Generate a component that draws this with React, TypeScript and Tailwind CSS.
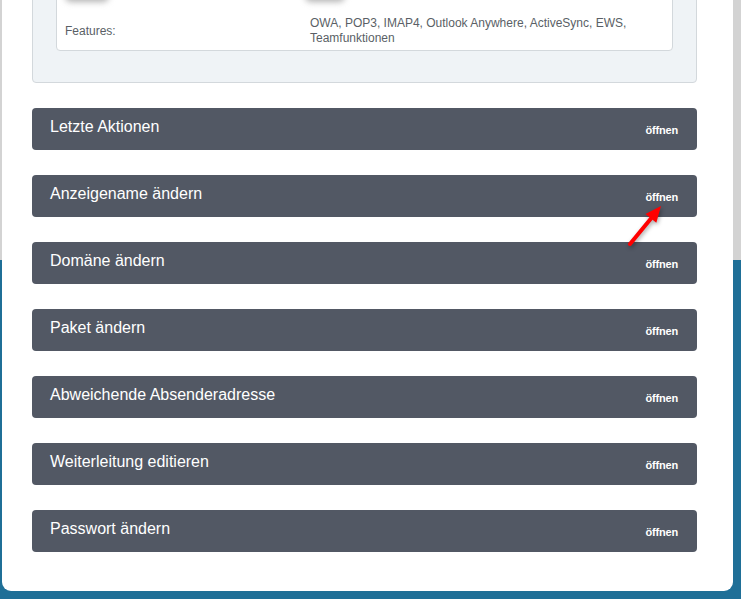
import React from "react";

const items = [
  "Letzte Aktionen",
  "Anzeigename ändern",
  "Domäne ändern",
  "Paket ändern",
  "Abweichende Absenderadresse",
  "Weiterleitung editieren",
  "Passwort ändern",
];

export default function App() {
  return (
    <div
      className="relative w-[741px] h-[599px] overflow-hidden bg-[linear-gradient(to_bottom,#d3d3d3_260px,#1f6f97_260px)]"
      style={{ fontFamily: '"Liberation Sans", Arial, sans-serif' }}
    >
      <div className="relative ml-[2px] w-[731px] h-[591px] bg-white rounded-b-[9px] px-[30px] overflow-hidden">
        {/* info panel */}
        <div className="relative w-[665px] mt-[-17px] bg-[#eff3f6] border border-[#d3d8dc] rounded-b-[4px] px-[23px] pb-[31px]">
          <div className="bg-white border border-[#d3d8dc] rounded-b-[4px] pt-[31px] pb-[4px] px-[8px]">
            <div className="flex items-center text-[12px] leading-[15px] text-[#5a5f66]">
              <div className="w-[245px]">Features:</div>
              <div>
                OWA, POP3, IMAP4, Outlook Anywhere, ActiveSync, EWS,
                <br />
                Teamfunktionen
              </div>
            </div>
          </div>
          <div className="absolute left-[32px] top-[6px] w-[44px] h-[12px] rounded-full bg-[#b4b4b4] blur-[3px]" />
          <div className="absolute left-[272px] top-[6px] w-[40px] h-[12px] rounded-full bg-[#b4b4b4] blur-[3px]" />
        </div>

        {/* accordion bars */}
        <div className="mt-[25px] flex flex-col gap-[25px] w-[665px]">
          {items.map((t) => (
            <div
              key={t}
              className="h-[42px] bg-[#525864] rounded-[4px] flex items-center justify-between pl-[18px] pr-[19px] text-white"
            >
              <span className="text-[16px] leading-[18px] mt-[-4px]">{t}</span>
              <span className="text-[11px] font-bold leading-[13px] mt-[2px] tracking-[-0.2px]">öffnen</span>
            </div>
          ))}
        </div>
      </div>

      {/* red arrow */}
      <svg
        className="absolute left-0 top-0 pointer-events-none"
        width="741"
        height="599"
        style={{ filter: "drop-shadow(1px 2px 2px rgba(0,0,0,0.35))" }}
      >
        <line x1="630" y1="244" x2="651" y2="218.4" stroke="#ff0000" strokeWidth="4" strokeLinecap="round" />
        <polygon points="661,206 656.3,222.8 645.5,214" fill="#ff0000" />
      </svg>
    </div>
  );
}
